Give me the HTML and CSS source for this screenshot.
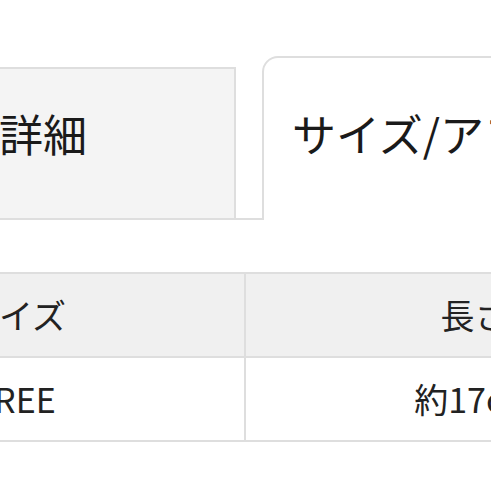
FILE: index.html
```html
<!DOCTYPE html>
<html lang="ja">
<head>
<meta charset="utf-8">
<title>サイズ/アフター</title>
<link rel="stylesheet" href="styles.css">
</head>
<body>
<div class="wrap">
  <div class="tabs">
    <div class="tab">商品詳細</div>
    <div class="tab active">サイズ/アフターケア</div>
  </div>
  <table class="size-table">
    <tr>
      <th>サイズ</th>
      <th>長さ</th>
    </tr>
    <tr>
      <td>FREE</td>
      <td>約17cm</td>
    </tr>
  </table>
</div>
</body>
</html>
```
FILE: styles.css
```css
html, body {
  margin: 0;
  padding: 0;
  background: #fff;
  overflow: hidden;
}
body {
  font-family: "Noto Sans CJK JP", "Noto Sans", sans-serif;
  color: #1a1a1a;
}
.wrap {
  margin-left: -238px;
  width: 1000px;
  padding-top: 56px;
}
.tabs {
  display: flex;
  align-items: flex-end;
  gap: 26px;
  border-bottom: 2px solid #dedede;
}
.tab {
  box-sizing: border-box;
  width: 474px;
  border: 2px solid #dedede;
  border-bottom: 0;
  background: #f4f4f4;
  font-size: 44px;
  line-height: 44px;
  padding: 42px 0 63px;
  text-align: center;
  white-space: nowrap;
  overflow: hidden;
}
.tab.active {
  background: #fff;
  border-radius: 16px 16px 0 0;
  margin-bottom: -2px;
  padding: 53px 0 65px 28px;
  text-align: left;
  width: 474px;
}
.size-table {
  margin-top: 52px;
  margin-left: 23px;
  border-collapse: separate;
  border-spacing: 0;
  border-top: 2px solid #dedede;
  border-left: 2px solid #dedede;
  width: 920px;
  table-layout: fixed;
}
.size-table th,
.size-table td {
  border-right: 2px solid #dedede;
  border-bottom: 2px solid #dedede;
  padding: 0;
  line-height: 82px;
  font-size: 34px;
  font-weight: normal;
  text-align: center;
  color: #222;
}
.size-table th {
  background: #f0f0f0;
}
.size-table td {
  background: #fff;
}
```
